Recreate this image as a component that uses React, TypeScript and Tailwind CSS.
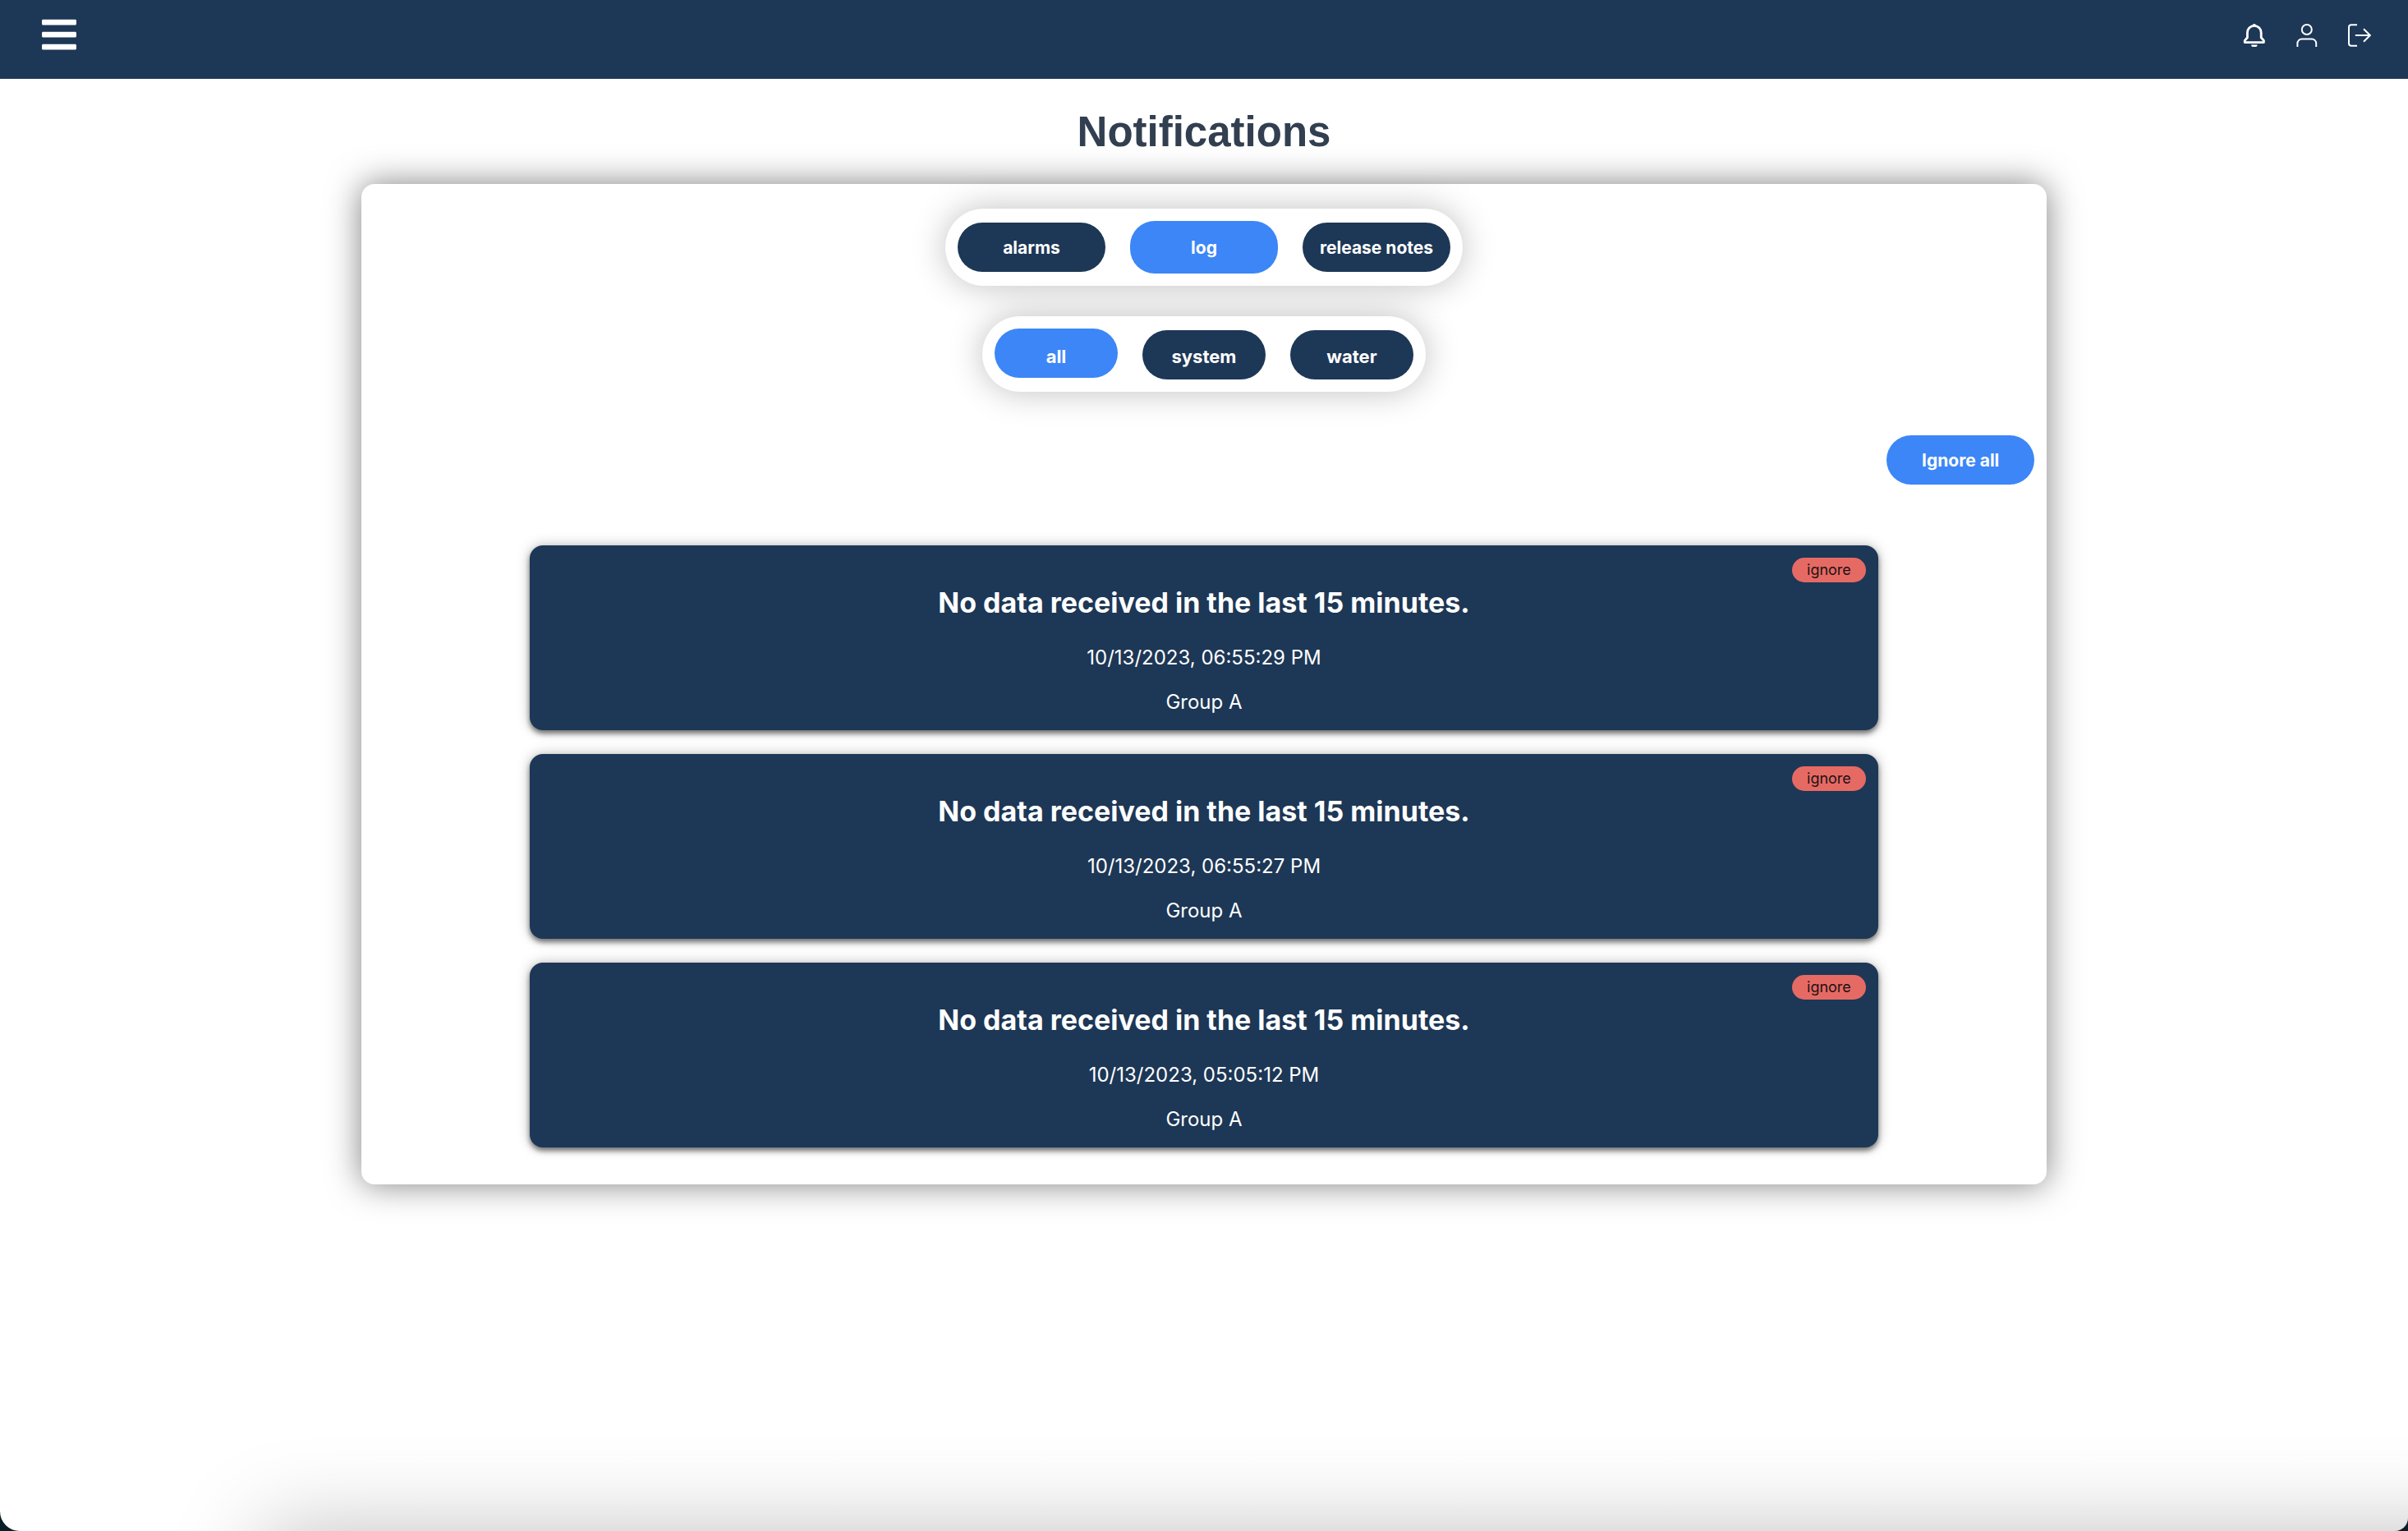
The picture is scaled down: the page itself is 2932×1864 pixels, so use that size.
import { useState } from "react";
import { FaBars } from "react-icons/fa";

type Tab = "alarms" | "log" | "release notes";
type Filter = "all" | "system" | "water";

type Entry = { id: number; title: string; time: string; group: string };

const TABS: Tab[] = ["alarms", "log", "release notes"];
const FILTERS: Filter[] = ["all", "system", "water"];

const ENTRIES: Entry[] = [
  { id: 1, title: "No data received in the last 15 minutes.", time: "10/13/2023, 06:55:29 PM", group: "Group A" },
  { id: 2, title: "No data received in the last 15 minutes.", time: "10/13/2023, 06:55:27 PM", group: "Group A" },
  { id: 3, title: "No data received in the last 15 minutes.", time: "10/13/2023, 05:05:12 PM", group: "Group A" },
];

function BellIcon() {
  return (
    <svg className="size-7" viewBox="0 0 28 28" fill="none" stroke="currentColor" strokeWidth="2.8" strokeLinejoin="round" aria-hidden="true">
      <path d="M2.2 22.6v-2.2l3.2-3.6v-6a8.4 8.4 0 0 1 16.8 0v6l3.2 3.6v2.2z" />
      <path d="M11.8 1.6 13.8 0l2 1.6z" fill="currentColor" strokeWidth="1" />
      <path d="M10 25.4h7.6a3.8 2.9 0 0 1-7.6 0z" fill="currentColor" stroke="none" />
    </svg>
  );
}

function UserIcon() {
  return (
    <svg className="size-7" viewBox="0 0 28 28" fill="none" stroke="currentColor" strokeWidth="2" aria-hidden="true">
      <circle cx="13.8" cy="7" r="6" />
      <path d="M2.4 28v-4.2a5.2 5.2 0 0 1 5.2-5.2H20a5.2 5.2 0 0 1 5.2 5.2V28" />
    </svg>
  );
}

function LogoutIcon() {
  return (
    <svg className="size-7" viewBox="0 0 28 28" fill="none" stroke="currentColor" strokeWidth="2" aria-hidden="true">
      <path d="M11 1.2H4a3 3 0 0 0-3 3v19.6a3 3 0 0 0 3 3h7" />
      <path d="M8.8 14H27M19 6.2l7.8 7.8-7.8 7.8" />
    </svg>
  );
}

function Header() {
  return (
    <header className="flex h-24 items-start justify-between bg-[#1d3756] pl-12 pr-[45px] text-white">
      <button type="button" aria-label="Menu" className="mt-[18px] text-5xl leading-none">
        <FaBars />
      </button>
      <nav className="mt-[29px] flex gap-9">
        <button type="button" aria-label="Notifications"><BellIcon /></button>
        <button type="button" aria-label="Profile"><UserIcon /></button>
        <button type="button" aria-label="Log out"><LogoutIcon /></button>
      </nav>
    </header>
  );
}

function Card({ entry, onIgnore }: { entry: Entry; onIgnore: () => void }) {
  return (
    <li className="relative flex flex-col items-center rounded-2xl bg-[#1d3756] pt-[50px] pb-[18px] text-white shadow-[0_4px_6px_rgba(0,0,0,0.5),0_0_16px_rgba(0,0,0,0.25)]">
      <h2 className="text-[34px] leading-10 font-bold">{entry.title}</h2>
      <p className="mt-[31px] text-2xl leading-8">{entry.time}</p>
      <p className="mt-[22px] text-2xl leading-8">{entry.group}</p>
      <button
        type="button"
        onClick={onIgnore}
        className="absolute top-[15px] right-[15px] h-[30px] w-[90px] rounded-full bg-[#e66a64] text-lg leading-none text-[#1d1214]"
      >
        ignore
      </button>
    </li>
  );
}

export default function App() {
  const [tab, setTab] = useState<Tab>("log");
  const [filter, setFilter] = useState<Filter>("all");
  const [entries, setEntries] = useState(ENTRIES);

  return (
    <div className="bg-[#0b1f28] font-['Inter',sans-serif]">
      <div className="relative min-h-screen overflow-hidden rounded-br-2xl rounded-bl-3xl bg-white">
        <Header />
        <main>
          <h1 className="flex h-32 items-center justify-center font-['Liberation_Sans',sans-serif] text-[51px] leading-none font-bold text-[#323f50]">
            Notifications
          </h1>
          <section className="mx-auto flex w-[70%] flex-col items-center rounded-2xl bg-white pt-[30px] pb-[45px] shadow-[0_0_40px_rgba(0,0,0,0.5)]">
            <div className="flex items-center gap-[30px] rounded-full bg-white p-[15px] shadow-[0_0_40px_rgba(0,0,0,0.25)]">
              {TABS.map((name) => (
                <button
                  key={name}
                  type="button"
                  aria-pressed={tab === name}
                  onClick={() => setTab(name)}
                  className={`w-[180px] rounded-[30px] text-[21px] leading-none font-bold text-white ${
                    tab === name ? "h-16 bg-[#3c86f7]" : "h-[60px] bg-[#1d3756]"
                  }`}
                >
                  {name}
                </button>
              ))}
            </div>
            <div className="mt-[37px] flex h-[92px] gap-[30px] rounded-full bg-white p-[15px] shadow-[0_0_40px_rgba(0,0,0,0.25)]">
              {FILTERS.map((name) => (
                <button
                  key={name}
                  type="button"
                  aria-pressed={filter === name}
                  onClick={() => setFilter(name)}
                  className={`h-[60px] w-[150px] rounded-[30px] text-[22px] leading-none font-bold text-white ${
                    filter === name ? "self-start bg-[#3c86f7] pt-2" : "self-end bg-[#1d3756] pt-1"
                  }`}
                >
                  {name}
                </button>
              ))}
            </div>
            <button
              type="button"
              onClick={() => setEntries([])}
              className="mt-[53px] mr-[15px] h-[60px] w-[180px] self-end rounded-full bg-[#3c86f7] text-[21px] leading-none font-bold text-white"
            >
              Ignore all
            </button>
            <ul className="mt-[74px] flex w-4/5 flex-col gap-[29px]">
              {entries.map((entry) => (
                <Card
                  key={entry.id}
                  entry={entry}
                  onIgnore={() => setEntries(entries.filter((other) => other.id !== entry.id))}
                />
              ))}
            </ul>
          </section>
        </main>
        <div className="absolute top-full -right-52 left-[320px] h-80 shadow-[0_0_110px_rgba(0,0,0,0.25)]" />
      </div>
    </div>
  );
}
